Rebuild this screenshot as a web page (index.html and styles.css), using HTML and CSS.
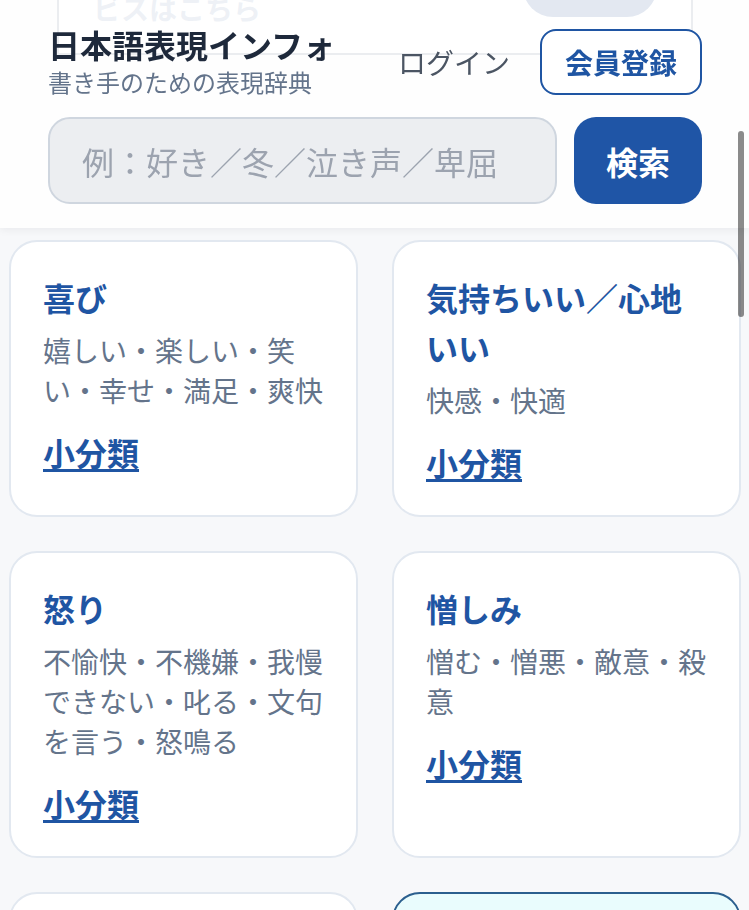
FILE: index.html
```html
<!DOCTYPE html>
<html lang="ja">
<head>
<meta charset="utf-8">
<title>日本語表現インフォ</title>
<link rel="stylesheet" href="styles.css">
</head>
<body>
<header class="site-header">
  <div class="header-top">
    <div class="brand">
      <div class="brand-title">日本語表現インフォ</div>
      <div class="brand-sub">書き手のための表現辞典</div>
    </div>
    <nav class="header-nav">
      <a class="nav-login" href="#">ログイン</a>
      <a class="nav-signup" href="#">会員登録</a>
    </nav>
  </div>
  <form class="search-row">
    <input class="search-input" type="text" placeholder="例：好き／冬／泣き声／卑屈">
    <button class="search-btn" type="button">検索</button>
  </form>
</header>

<main class="page">
  <section class="promo">
    <p class="promo-text">ビスはこちら</p>
    <span class="promo-pill"></span>
  </section>

  <section class="cards">
    <article class="card">
      <h2 class="card-title">喜び</h2>
      <p class="card-desc">嬉しい・楽しい・笑い・幸せ・満足・爽快</p>
      <a class="card-link" href="#">小分類</a>
    </article>
    <article class="card">
      <h2 class="card-title">気持ちいい／心地いい</h2>
      <p class="card-desc">快感・快適</p>
      <a class="card-link" href="#">小分類</a>
    </article>
    <article class="card">
      <h2 class="card-title">怒り</h2>
      <p class="card-desc">不愉快・不機嫌・我慢できない・叱る・文句を言う・怒鳴る</p>
      <a class="card-link" href="#">小分類</a>
    </article>
    <article class="card">
      <h2 class="card-title">憎しみ</h2>
      <p class="card-desc">憎む・憎悪・敵意・殺意</p>
      <a class="card-link" href="#">小分類</a>
    </article>
    <article class="card card-empty"></article>
    <article class="card card-empty card-accent"></article>
  </section>
</main>

<div class="scroll-indicator"></div>
</body>
</html>
```

FILE: styles.css
```css
* {
  box-sizing: border-box;
}

html, body {
  margin: 0;
  padding: 0;
}

body {
  background: #f7f8fa;
  font-family: "Noto Sans CJK JP", "Noto Sans", "Liberation Sans", sans-serif;
  color: #1e293b;
  overflow: hidden;
}

/* ---------- Header (fixed, translucent, over the content) ---------- */
.site-header {
  position: fixed;
  top: 0;
  left: 0;
  right: 0;
  z-index: 10;
  height: 228px;
  padding: 24px 47px 0 48px;
  background: rgba(255, 255, 255, 0.8);
  box-shadow: 0 2px 8px rgba(15, 23, 42, 0.06);
}

.header-top {
  display: flex;
  justify-content: space-between;
  align-items: center;
}

.brand-title {
  font-size: 32px;
  line-height: 40px;
  font-weight: 700;
  color: #1e293b;
}

.brand-sub {
  font-size: 24px;
  line-height: 36px;
  color: #64748b;
}

.header-nav {
  display: flex;
  align-items: center;
  gap: 30px;
}

.nav-login {
  font-size: 28px;
  line-height: 40px;
  color: #4b5563;
  text-decoration: none;
}

.nav-signup {
  display: flex;
  align-items: center;
  height: 66px;
  padding: 0 23px;
  border: 2px solid #1f55a3;
  border-radius: 16px;
  background: #ffffff;
  color: #1f55a3;
  font-size: 28px;
  font-weight: 700;
  text-decoration: none;
}

.search-row {
  display: flex;
  gap: 17px;
  margin: 17px 0 0;
}

.search-input {
  flex: 1;
  min-width: 0;
  height: 87px;
  padding: 0 0 0 32px;
  border: 2px solid #cfd6df;
  border-radius: 22px;
  background: #eceef1;
  font-family: inherit;
  font-size: 32px;
  color: #1e293b;
  outline: none;
}

.search-input::placeholder {
  color: #9ca3af;
}

.search-btn {
  width: 128px;
  height: 87px;
  border: 0;
  border-radius: 22px;
  background: #1f55a6;
  color: #ffffff;
  font-family: inherit;
  font-size: 32px;
  font-weight: 700;
}

/* ---------- Content scrolled under the header ---------- */
.page {
  margin-top: -45px;
}

.promo {
  display: flex;
  justify-content: space-between;
  align-items: flex-end;
  margin: 0 56px 0 57px;
  padding: 0 34px 25px 34px;
  border: 2px solid #9ba5b4;
  border-top: 0;
  background: #ffffff;
  height: 100px;
}

.promo-text {
  margin: 0;
  font-size: 28px;
  line-height: 40px;
  font-weight: 700;
  color: #aab8cf;
}

.promo-pill {
  width: 134px;
  height: 60px;
  margin-bottom: 11px;
  border-radius: 30px;
  background: #738cb9;
}

.cards {
  display: grid;
  grid-template-columns: 1fr 1fr;
  gap: 34px;
  padding: 0 8px 40px 9px;
  margin-top: 185px;
}

.card {
  border: 2px solid #e2e8f0;
  border-radius: 28px;
  background: #ffffff;
  padding: 30px 32px 31px;
}

.card-title {
  margin: 0;
  font-size: 32px;
  line-height: 50px;
  font-weight: 700;
  color: #1f55a3;
}

.card-desc {
  margin: 8px 0 0;
  font-size: 28px;
  line-height: 40px;
  color: #64748b;
}

.card-link {
  display: block;
  margin-top: 20px;
  font-size: 32px;
  line-height: 44px;
  font-weight: 700;
  color: #1f55a3;
  text-decoration: underline;
  text-underline-offset: 3px;
}

.card-empty {
  min-height: 260px;
}

.card-accent {
  background: #e9fcfd;
  border-color: #2b5f8e;
}

/* iOS-style scroll indicator overlay */
.scroll-indicator {
  position: fixed;
  top: 131px;
  right: 5px;
  width: 6px;
  height: 186px;
  border-radius: 3px;
  background: rgba(0, 0, 0, 0.45);
  z-index: 20;
}
```
